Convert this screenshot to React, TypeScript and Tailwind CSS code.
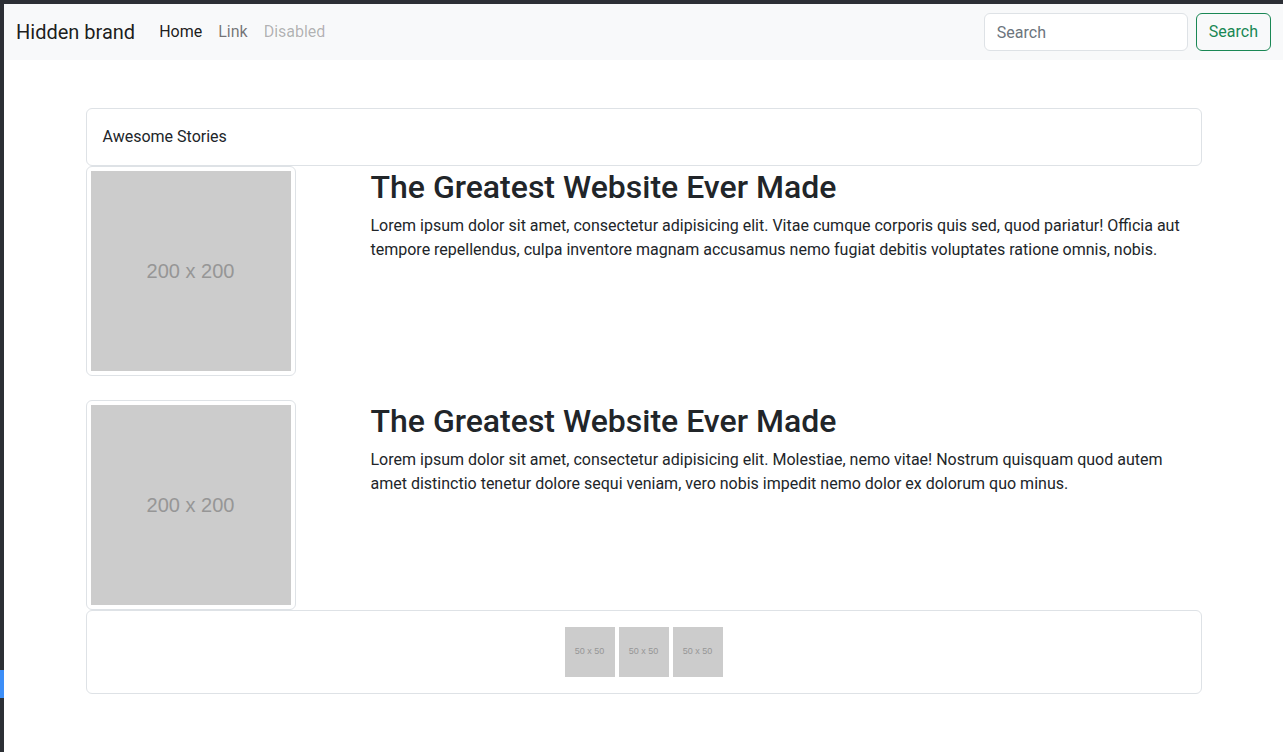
import React from "react";

const font = { fontFamily: "Roboto, 'Noto Sans', sans-serif" };

function Placeholder({ size }: { size: "lg" | "sm" }) {
  if (size === "lg") {
    return (
      <div className="w-[200px] h-[200px] bg-[#cccccc] flex items-center justify-center text-[20px] text-[#969696] font-['Liberation_Sans',Arial,sans-serif]">
        200 x 200
      </div>
    );
  }
  return (
    <div className="w-[50px] h-[50px] bg-[#cccccc] flex items-center justify-center text-[9px] text-[#969696] font-['Liberation_Sans',Arial,sans-serif]">
      50 x 50
    </div>
  );
}

const stories = [
  {
    title: "The Greatest Website Ever Made",
    body: "Lorem ipsum dolor sit amet, consectetur adipisicing elit. Vitae cumque corporis quis sed, quod pariatur! Officia aut tempore repellendus, culpa inventore magnam accusamus nemo fugiat debitis voluptates ratione omnis, nobis.",
  },
  {
    title: "The Greatest Website Ever Made",
    body: "Lorem ipsum dolor sit amet, consectetur adipisicing elit. Molestiae, nemo vitae! Nostrum quisquam quod autem amet distinctio tenetur dolore sequi veniam, vero nobis impedit nemo dolor ex dolorum quo minus.",
  },
];

export default function App() {
  return (
    <div className="w-[1283px] h-[752px] flex flex-col bg-white text-[#212529] overflow-hidden" style={font}>
      <div className="h-[4px] bg-[#2c2f35] shrink-0" />
      <div className="flex flex-1 min-h-0">
        <div className="w-[4px] shrink-0 bg-[#2c2f35] flex flex-col">
          <div className="h-[666px]" />
          <div className="h-[28px] bg-[#3d8ef7]" />
        </div>
        <div className="flex-1 min-w-0">
          {/* navbar */}
          <nav className="h-[56px] bg-[#f8f9fa] flex items-center px-3">
            <span className="text-[20px] text-black/90 mr-4">Hidden brand</span>
            <div className="flex text-[16px]">
              <a className="px-2 text-black/90">Home</a>
              <a className="px-2 text-black/55">Link</a>
              <a className="px-2 text-black/30">Disabled</a>
            </div>
            <div className="ml-auto flex items-center gap-2">
              <input
                placeholder="Search"
                className="w-[204px] h-[38px] px-3 rounded-md border border-[#dee2e6] bg-white text-[16px] placeholder:text-[#6c757d] outline-none"
              />
              <button className="h-[38px] px-3 rounded-md border border-[#198754] text-[#198754] text-[16px] bg-transparent">
                Search
              </button>
            </div>
          </nav>

          <div className="w-[1116px] mx-auto mt-12">
            <div className="border border-[#dee2e6] rounded-md p-4 text-[16px] leading-6">Awesome Stories</div>

            {stories.map((s, i) => (
              <div key={i} className={i === 0 ? "flex mb-6" : "flex"}>
                <div className="w-[285px] shrink-0">
                  <div className="inline-block p-1 border border-[#dee2e6] rounded-md bg-white">
                    <Placeholder size="lg" />
                  </div>
                </div>
                <div className="flex-1 min-w-0">
                  <h2 className="text-[32px] font-medium leading-[1.2] mb-2 pt-[2px]">{s.title}</h2>
                  <p className="text-[16px] leading-6">{s.body}</p>
                </div>
              </div>
            ))}

            <div className="border border-[#dee2e6] rounded-md p-4 flex justify-center gap-1">
              <Placeholder size="sm" />
              <Placeholder size="sm" />
              <Placeholder size="sm" />
            </div>
          </div>
        </div>
      </div>
    </div>
  );
}
